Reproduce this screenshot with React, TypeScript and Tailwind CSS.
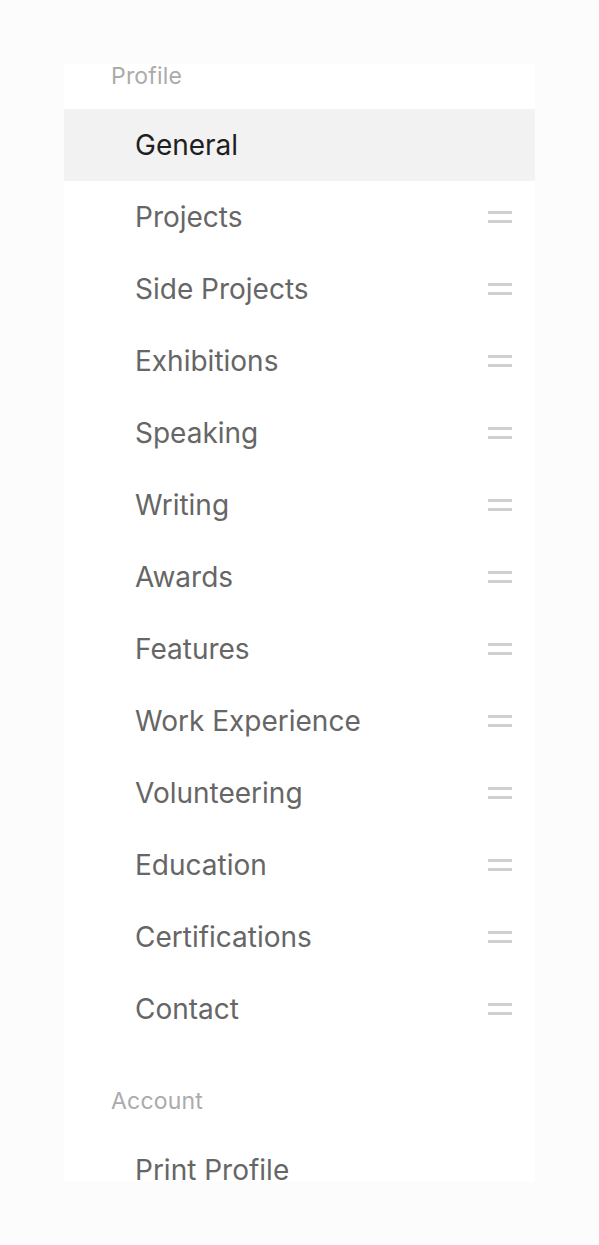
const items = [
  'Projects',
  'Side Projects',
  'Exhibitions',
  'Speaking',
  'Writing',
  'Awards',
  'Features',
  'Work Experience',
  'Volunteering',
  'Education',
  'Certifications',
  'Contact',
];

const DragHandle = () => (
  <div className="flex flex-col gap-[6px]">
    <span className="block h-[3px] w-6 bg-[#cfcfcf]" />
    <span className="block h-[3px] w-6 bg-[#cfcfcf]" />
  </div>
);

const SectionLabel = ({ children }: { children: string }) => (
  <div className="h-[45px] pl-[47px] text-[23px] leading-[24px] text-[#ababab] tracking-[0.2px]">{children}</div>
);

export default function App() {
  return (
    <div
      className="min-h-screen bg-[#fcfcfc] pt-16 px-16"
      style={{ fontFamily: 'Inter, "Noto Sans", sans-serif' }}
    >
      <nav className="w-[471px] h-[1117px] bg-white">
        <SectionLabel>Profile</SectionLabel>
        <div className="h-[72px] pl-[71px] flex items-center bg-[#f2f2f2] text-[28px] text-[#1f1f1f]">
          General
        </div>
        {items.map((item) => (
          <div key={item} className="h-[72px] pl-[71px] pr-[23px] flex items-center justify-between text-[28px] text-[#666]">
            <span>{item}</span>
            <DragHandle />
          </div>
        ))}
        <div className="mt-[44px]">
          <SectionLabel>Account</SectionLabel>
        </div>
        <div className="h-[72px] pl-[71px] flex items-center text-[28px] text-[#666]">Print Profile</div>
      </nav>
    </div>
  );
}
